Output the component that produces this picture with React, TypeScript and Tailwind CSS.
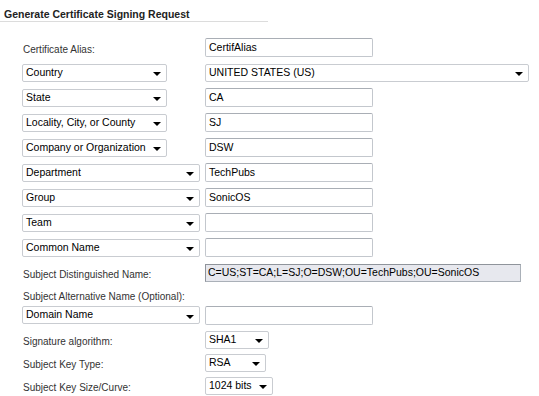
const font = { fontFamily: '"Liberation Sans", Arial, sans-serif' };

const Arrow = () => (
  <span className="mt-[3px] h-0 w-0 border-x-[4px] border-t-[4px] border-x-transparent border-t-black" />
);

const Select = ({ label, w }: { label: string; w: string }) => (
  <div
    className={`${w} flex h-[18px] items-center justify-between rounded-[2px] border border-[#c9ccd1] bg-white pl-[3px] pr-[5px] text-[10.5px] text-black`}
  >
    <span className="whitespace-nowrap">{label}</span>
    <Arrow />
  </div>
);

const Input = ({ value = "" }: { value?: string }) => (
  <div className="flex h-[19px] w-[168px] items-center rounded-[2px] border border-[#c3c7cd] border-t-[#a9aeb5] bg-white pl-[3px] text-[10.5px] text-black">
    {value}
  </div>
);

const Label = ({ text }: { text: string }) => (
  <span className="pl-[1px] text-[10px] text-[#333]">{text}</span>
);

const Row = ({ left, right, h = "h-[25px]" }: { left: React.ReactNode; right?: React.ReactNode; h?: string }) => (
  <div className={`flex ${h} items-center`}>
    <div className="w-[183px]">{left}</div>
    <div>{right}</div>
  </div>
);

export default function App() {
  return (
    <div className="h-[396px] w-[539px] overflow-hidden bg-white" style={font}>
      {/* header */}
      <div className="w-[268px] border-b border-[#dcdcdc] pl-[4px] pt-[7px]">
        <h1 className="text-[10.5px] leading-[14px] font-bold text-[#222]">Generate Certificate Signing Request</h1>
      </div>

      <div className="pl-[22px] pt-[13px]">
        <Row left={<Label text="Certificate Alias:" />} right={<Input value="CertifAlias" />} />
        <Row
          left={<Select label="Country" w="w-[145px]" />}
          right={<Select label="UNITED STATES (US)" w="w-[324px]" />}
        />
        <Row left={<Select label="State" w="w-[145px]" />} right={<Input value="CA" />} />
        <Row left={<Select label="Locality, City, or County" w="w-[145px]" />} right={<Input value="SJ" />} />
        <Row left={<Select label="Company or Organization" w="w-[145px]" />} right={<Input value="DSW" />} />
        <Row left={<Select label="Department" w="w-[178px]" />} right={<Input value="TechPubs" />} />
        <Row left={<Select label="Group" w="w-[178px]" />} right={<Input value="SonicOS" />} />
        <Row left={<Select label="Team" w="w-[178px]" />} right={<Input />} />
        <Row left={<Select label="Common Name" w="w-[178px]" />} right={<Input />} />
        <Row
          left={<Label text="Subject Distinguished Name:" />}
          right={
            <div className="flex h-[18px] w-[316px] items-center border border-[#aab0b8] border-l-[#8f949b] border-t-[#8f949b] bg-[#e7e8ee] pl-[2px] text-[10.5px] text-black">
              C=US;ST=CA;L=SJ;O=DSW;OU=TechPubs;OU=SonicOS
            </div>
          }
        />
        <Row h="h-[20px]" left={<Label text="Subject Alternative Name (Optional):" />} />
        <Row h="h-[20px]" left={<Select label="Domain Name" w="w-[178px]" />} right={<Input />} />
        <div className="h-[3px]" />
        <Row
          h="h-[23px]"
          left={<Label text="Signature algorithm:" />}
          right={<Select label="SHA1" w="w-[64px]" />}
        />
        <Row
          h="h-[23px]"
          left={<Label text="Subject Key Type:" />}
          right={<Select label="RSA" w="w-[61px]" />}
        />
        <Row
          h="h-[23px]"
          left={<Label text="Subject Key Size/Curve:" />}
          right={<Select label="1024 bits" w="w-[68px]" />}
        />
      </div>
    </div>
  );
}
